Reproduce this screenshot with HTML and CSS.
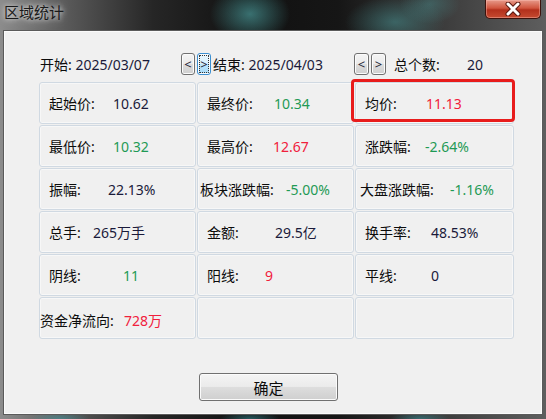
FILE: index.html
```html
<!DOCTYPE html>
<html lang="zh-CN">
<head>
  <meta charset="UTF-8" />
  <title>区域统计</title>
  <link rel="stylesheet" href="styles.css">
</head>
<body>
  <div class="window">
    <header class="titlebar">
      <span class="title">区域统计</span>
      <button class="close" aria-label="关闭">
        <svg width="20" height="14" viewBox="0 0 20 14">
          <path d="M5 2 L15 12 M15 2 L5 12" stroke="#5a1810" stroke-width="5" stroke-linecap="round" />
          <path d="M5 2 L15 12 M15 2 L5 12" stroke="#fff" stroke-width="3" stroke-linecap="round" />
        </svg>
      </button>
    </header>

    <main class="client">
      <div class="range">
        <span class="field">开始: <span class="date">2025/03/07</span></span>
        <button class="nav">&lt;</button>
        <button class="nav focus">&gt;</button>
        <span class="field end">结束: <span class="date">2025/04/03</span></span>
        <button class="nav wide">&lt;</button>
        <button class="nav wide">&gt;</button>
        <span class="count-label">总个数:</span>
        <span class="count">20</span>
      </div>

      <div class="stats">
        <div class="cell"><span class="k w64">起始价:</span><span class="v">10.62</span></div>
        <div class="cell"><span class="k w67">最终价:</span><span class="v down">10.34</span></div>
        <div class="cell"><span class="k w61">均价:</span><span class="v up">11.13</span></div>

        <div class="cell"><span class="k w64">最低价:</span><span class="v down">10.32</span></div>
        <div class="cell"><span class="k w66">最高价:</span><span class="v up">12.67</span></div>
        <div class="cell"><span class="k w60">涨跌幅:</span><span class="v down">-2.64%</span></div>

        <div class="cell"><span class="k w59">振幅:</span><span class="v">22.13%</span></div>
        <div class="cell narrow"><span class="k w86">板块涨跌幅:</span><span class="v down">-5.00%</span></div>
        <div class="cell mid"><span class="k w90">大盘涨跌幅:</span><span class="v down">-1.16%</span></div>

        <div class="cell"><span class="k w44">总手:</span><span class="v">265万手</span></div>
        <div class="cell"><span class="k w68">金额:</span><span class="v">29.5亿</span></div>
        <div class="cell"><span class="k w66">换手率:</span><span class="v">48.53%</span></div>

        <div class="cell"><span class="k w74">阴线:</span><span class="v down">11</span></div>
        <div class="cell"><span class="k w58">阳线:</span><span class="v up">9</span></div>
        <div class="cell"><span class="k w66">平线:</span><span class="v">0</span></div>

        <div class="cell flush"><span class="k w84">资金净流向:</span><span class="v up">728万</span></div>
        <div class="cell"></div>
        <div class="cell"></div>
      </div>

      <div class="mark"></div>

      <div class="actions">
        <button class="ok">确定</button>
      </div>
    </main>
  </div>
</body>
</html>
```

FILE: styles.css
```css
:root {
  --face: #f0f0f0;
  --cell-line: #d0d9e2;
  --red: #f0203c;
  --green: #1f9a55;
  --ink: #0c0c0c;
  --num: #1a1a3a;
}

* {
  box-sizing: border-box;
  margin: 0;
  padding: 0;
}

body {
  width: 546px;
  height: 419px;
  overflow: hidden;
  background: #1c1c1c;
  font-family: "Noto Sans", "Noto Sans CJK SC", sans-serif;
  font-size: 14px;
  color: var(--ink);
}

button {
  font-family: inherit;
  color: var(--ink);
}

/* aero glass frame */
.window {
  width: 546px;
  height: 419px;
  padding: 0 3px 4px;
  background:
    radial-gradient(ellipse 40px 30px at 250px 14px, rgba(90, 190, 190, 0.55), transparent),
    radial-gradient(ellipse 50px 26px at 395px 22px, rgba(80, 170, 170, 0.45), transparent),
    radial-gradient(ellipse 30px 20px at 430px 4px, rgba(80, 170, 170, 0.35), transparent),
    radial-gradient(ellipse 30px 8px at 60px 419px, rgba(60, 160, 170, 0.5), transparent),
    radial-gradient(ellipse 30px 8px at 250px 419px, rgba(60, 160, 170, 0.5), transparent),
    radial-gradient(ellipse 30px 8px at 420px 419px, rgba(60, 160, 170, 0.5), transparent),
    linear-gradient(90deg, #8c8c8c 0%, #5a5a5a 12%, #262626 28%, #111 45%, #161616 62%, #3a3a3a 80%, #5e5e5e 100%);
}

.titlebar {
  height: 30px;
  display: flex;
  justify-content: space-between;
  align-items: flex-start;
}

.title {
  font-family: "Noto Sans CJK SC", sans-serif;
  font-size: 15px;
  line-height: 24px;
  padding-left: 1px;
  color: #1a1a1a;
  text-shadow: 0 0 4px #d8d8d8, 0 0 8px rgba(255, 255, 255, 0.7);
}

.close {
  width: 56px;
  height: 19px;
  margin-right: 2px;
  border: 1px solid #3c120c;
  border-top: none;
  border-radius: 0 0 5px 5px;
  background: linear-gradient(#e79a8a, #d0553e 45%, #b3301c 55%, #c54a30);
  box-shadow: inset 0 0 0 1px rgba(255, 200, 190, 0.4);
  display: flex;
  align-items: center;
  justify-content: center;
}

.client {
  position: relative;
  height: 385px;
  background: var(--face);
  border: 1px solid #5a5a5a;
  box-shadow: inset 0 0 0 1px #fafafa;
  padding: 22px 0 0 35px;
}

/* date range row */
.range {
  display: flex;
  align-items: center;
  height: 22px;
}

.field {
  width: 142px;
  padding-left: 1px;
  white-space: nowrap;
}

.date,
.count,
.v {
  color: var(--num);
}

.nav {
  width: 14px;
  height: 22px;
  margin-right: 2px;
  border: 1px solid #707070;
  border-radius: 3px;
  background: linear-gradient(#f4f4f4, #ebebeb 48%, #dddddd 52%, #cfcfcf);
  box-shadow: inset 0 0 0 1px #fbfbfb;
  font-size: 13px;
  line-height: 18px;
  color: #223;
}

.nav.wide {
  width: 15px;
}

.nav.focus {
  margin-right: 1px;
  border-color: #3c8fd0;
  background: linear-gradient(#eaf6fd, #d9f0fc 48%, #bee6fd 52%, #a7d9f5);
  outline: 1px dotted #333;
  outline-offset: -3px;
}

.count-label {
  margin-left: 6px;
  width: 73px;
}

/* stat cells */
.stats {
  margin-top: 7px;
  display: grid;
  grid-template-columns: 157px 157px 159px;
  grid-auto-rows: 42px;
  gap: 1px;
}

.cell {
  display: flex;
  align-items: center;
  padding-left: 9px;
  border: 1px solid var(--cell-line);
  border-radius: 3px;
  box-shadow: inset 0 0 0 1px #f7f7f7;
  white-space: nowrap;
}

.cell.flush {
  padding-left: 0;
  padding-top: 4px;
}

.cell.narrow {
  padding-left: 2px;
}

.cell.mid {
  padding-left: 4px;
}

.k {
  display: inline-block;
}

.w44 { width: 44px; }
.w58 { width: 58px; }
.w59 { width: 59px; }
.w60 { width: 60px; }
.w61 { width: 61px; }
.w64 { width: 64px; }
.w66 { width: 66px; }
.w67 { width: 67px; }
.w68 { width: 68px; }
.w74 { width: 74px; }
.w84 { width: 84px; }
.w86 { width: 86px; }
.w90 { width: 90px; }

.v.up {
  color: var(--red);
}

.v.down {
  color: var(--green);
}

/* highlight drawn over the average price cell */
.mark {
  position: absolute;
  left: 347px;
  top: 48px;
  width: 164px;
  height: 43px;
  border: 3px solid #e81c1c;
  border-radius: 4px;
}

.actions {
  margin: 34px 0 0 160px;
}

.ok {
  width: 139px;
  height: 28px;
  border: 1px solid #707070;
  border-radius: 3px;
  background: linear-gradient(#f4f4f4, #ebebeb 48%, #dddddd 52%, #cfcfcf);
  box-shadow: inset 0 0 0 1px #fbfbfb;
  font-size: 15px;
}
```
